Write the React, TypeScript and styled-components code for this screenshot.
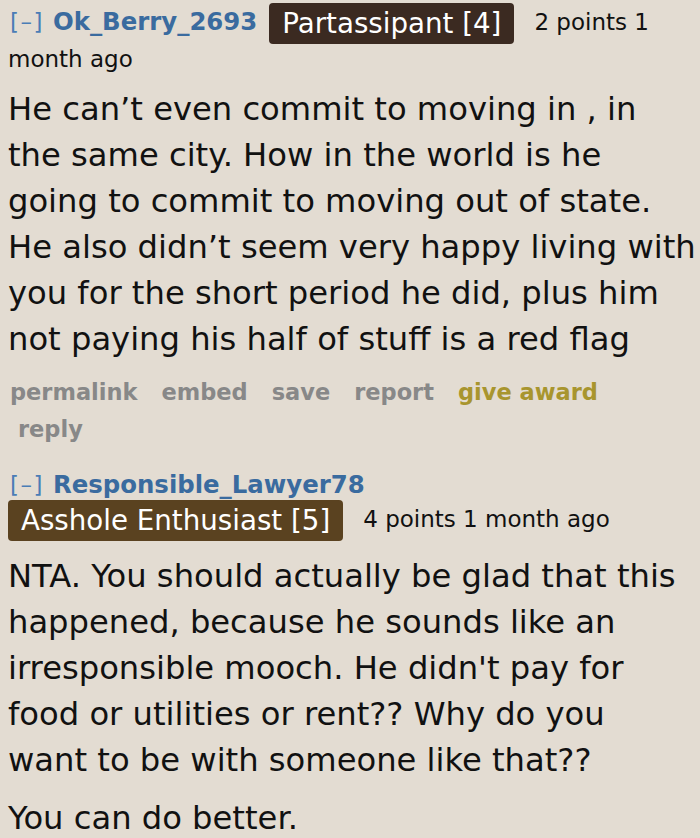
import React from 'react'
import styled, { createGlobalStyle } from 'styled-components'

const GlobalStyle = createGlobalStyle`
  html, body {
    margin: 0;
    padding: 0;
    background: #e3dcd2;
  }
  body {
    font-family: "DejaVu Sans", Verdana, sans-serif;
    color: #111111;
  }
`

type Comment = {
  author: string
  flair: string
  flairTone: 'dark' | 'brown'
  score: string
  paragraphs: string[]
  breakAfterAuthor?: boolean
  bodyWidth: number
  showButtons?: boolean
}

const comments: Comment[] = [
  {
    author: 'Ok_Berry_2693',
    flair: 'Partassipant [4]',
    flairTone: 'dark',
    score: '2 points 1 month ago',
    showButtons: true,
    bodyWidth: 690,
    paragraphs: [
      'He can’t even commit to moving in , in the same city. How in the world is he going to commit to moving out of state. He also didn’t seem very happy living with you for the short period he did, plus him not paying his half of stuff is a red flag',
    ],
  },
  {
    author: 'Responsible_Lawyer78',
    flair: 'Asshole Enthusiast [5]',
    flairTone: 'brown',
    score: '4 points 1 month ago',
    breakAfterAuthor: true,
    bodyWidth: 684,
    paragraphs: [
      "NTA. You should actually be glad that this happened, because he sounds like an irresponsible mooch. He didn't pay for food or utilities or rent?? Why do you want to be with someone like that??",
      'You can do better.',
    ],
  },
]

const buttons = ['permalink', 'embed', 'save', 'report', 'give award', 'reply']

export default function App() {
  return (
    <Page>
      <GlobalStyle />
      {comments.map((c, i) => (
        <CommentBlock key={c.author} $first={i === 0}>
          <Tagline>
            <Expand>[–]</Expand>
            <Author>{c.author}</Author>
            {c.breakAfterAuthor && <br />}
            <Flair $tone={c.flairTone}>{c.flair}</Flair>
            <Score>{c.score}</Score>
          </Tagline>
          <Body $width={c.bodyWidth}>
            {c.paragraphs.map((p) => (
              <Paragraph key={p}>{p}</Paragraph>
            ))}
          </Body>
          {c.showButtons && (
            <Buttons>
              {buttons.map((b) => (
                <ButtonItem key={b} $gold={b === 'give award'} $wrapped={b === 'reply'}>
                  {b}
                </ButtonItem>
              ))}
            </Buttons>
          )}
        </CommentBlock>
      ))}
    </Page>
  )
}

const Page = styled.div`
  padding: 3px 0 0 8px;
  width: 700px;
  box-sizing: border-box;
`

const CommentBlock = styled.div<{ $first: boolean }>`
  margin-top: ${(p) => (p.$first ? '0' : '22px')};
`

const Tagline = styled.div`
  font-size: 23px;
  line-height: 30px;
`

const Expand = styled.span`
  color: #4a7db6;
  letter-spacing: 1.5px;
  margin: 0 9px 0 2px;
`

const Author = styled.span`
  color: #3a6b9f;
  font-weight: bold;
  font-size: 24.4px;
  margin-right: 12px;
`

const Flair = styled.span<{ $tone: 'dark' | 'brown' }>`
  display: inline-block;
  background: ${(p) => (p.$tone === 'dark' ? '#3b2a21' : '#5a4220')};
  color: #ffffff;
  font-size: 27.7px;
  line-height: 41px;
  padding: 0 13px;
  border-radius: 4px;
  margin-right: 20px;
  vertical-align: middle;
`

const Score = styled.span`
  color: #111111;
`

const Body = styled.div<{ $width: number }>`
  margin-top: 12px;
  max-width: ${(p) => p.$width}px;
  font-size: 32.2px;
  line-height: 46px;
`

const Paragraph = styled.p`
  margin: 0 0 12px;
  &:last-child {
    margin-bottom: 0;
  }
`

const Buttons = styled.ul`
  list-style: none;
  margin: 12px 0 0;
  padding: 0 0 0 2px;
  font-size: 22.5px;
  line-height: 37px;
  font-weight: bold;
`

const ButtonItem = styled.li<{ $gold: boolean; $wrapped: boolean }>`
  display: inline-block;
  margin-right: 24px;
  margin-left: ${(p) => (p.$wrapped ? '8px' : '0')};
  color: ${(p) => (p.$gold ? '#a8952e' : '#888888')};
`
